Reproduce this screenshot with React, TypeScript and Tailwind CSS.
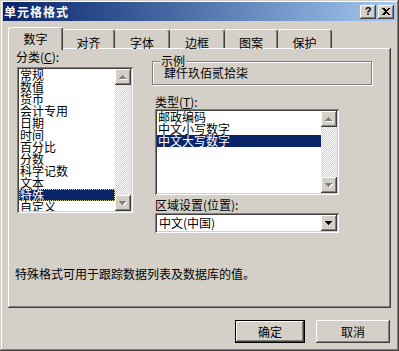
import React from "react";

const font = "font-['Noto_Sans_CJK_SC','Noto_Sans',sans-serif]";
const raised =
  "shadow-[inset_-1px_-1px_#404040,inset_1px_1px_#fff,inset_-2px_-2px_#808080]";
const sunken =
  "shadow-[inset_1px_1px_#808080,inset_-1px_-1px_#fff,inset_2px_2px_#404040,inset_-2px_-2px_#d4d0c8]";

function Arrow({ dir, dark }: { dir: "up" | "down"; dark?: boolean }) {
  const d =
    dir === "up"
      ? "M3 0h1v1h1v1h1v1h1v1H0V3h1V2h1V1h1z"
      : "M0 0h7v1H6v1H5v1H4v1H3V3H2V2H1V1H0z";
  return (
    <svg width="8" height="5" viewBox="0 0 8 5" shapeRendering="crispEdges">
      {!dark && <path d={d} transform="translate(1 1)" fill="#fff" />}
      <path d={d} fill={dark ? "#000" : "#808080"} />
    </svg>
  );
}

function ScrollButton({ dir, dark }: { dir: "up" | "down"; dark?: boolean }) {
  return (
    <div
      className={`w-[16px] h-[16px] shrink-0 bg-[#d4d0c8] flex items-center justify-center ${raised}`}
    >
      <Arrow dir={dir} dark={dark} />
    </div>
  );
}

function ScrollBar() {
  return (
    <div className="w-[16px] h-full flex flex-col shrink-0">
      <ScrollButton dir="up" />
      <div className="flex-1 bg-[image:repeating-conic-gradient(#d4d0c8_0_25%,#fff_0_50%)] bg-[length:2px_2px]" />
      <ScrollButton dir="down" />
    </div>
  );
}

function ListBox({
  items,
  selected,
  focus,
  className,
}: {
  items: string[];
  selected: number;
  focus?: boolean;
  className: string;
}) {
  return (
    <div className={`bg-white p-[2px] flex ${sunken} ${className}`}>
      <div className="flex-1 overflow-hidden flex flex-col">
        {items.map((t, i) => (
          <div
            key={t}
            className={`h-[12px] shrink-0 leading-[12px] text-[12px] pl-[1px] whitespace-nowrap ${
              i === selected
                ? `bg-[#0a246a] text-white ${
                    focus ? "outline-1 outline-dotted outline-[#d8d090] -outline-offset-1" : ""
                  }`
                : "text-black"
            }`}
          >
            {t}
          </div>
        ))}
      </div>
      <ScrollBar />
    </div>
  );
}

const tabs = [
  { label: "数字", w: "w-[55px]" },
  { label: "对齐", w: "w-[52px]" },
  { label: "字体", w: "w-[55px]" },
  { label: "边框", w: "w-[55px]" },
  { label: "图案", w: "w-[53px]" },
  { label: "保护", w: "w-[54px]" },
];

const categories = [
  "常规",
  "数值",
  "货币",
  "会计专用",
  "日期",
  "时间",
  "百分比",
  "分数",
  "科学记数",
  "文本",
  "特殊",
  "自定义",
];

export default function App() {
  return (
    <div
      className={`w-[399px] h-[351px] bg-[#d4d0c8] pt-[2px] px-[3px] flex flex-col text-black ${font} shadow-[inset_-1px_-1px_#404040,inset_1px_1px_#d4d0c8,inset_-2px_-2px_#808080,inset_2px_2px_#fff]`}
    >
      {/* title bar */}
      <div className="h-[19px] shrink-0 flex items-center justify-between pl-[1px] pr-[2px] bg-linear-to-r from-[#0a246a] to-[#a6caf0]">
        <span className="text-[12px] leading-[12px] font-bold tracking-[1px] text-white">
          单元格格式
        </span>
        <div className="flex gap-[2px]">
          <div
            className={`w-[16px] h-[14px] bg-[#d4d0c8] flex items-center justify-center text-[11px] font-bold leading-none font-['Liberation_Sans',sans-serif] ${raised}`}
          >
            ?
          </div>
          <div
            className={`w-[16px] h-[14px] bg-[#d4d0c8] flex items-center justify-center ${raised}`}
          >
            <svg width="8" height="7" viewBox="0 0 8 7" shapeRendering="crispEdges">
              <path
                d="M0 0h2l2 2 2-2h2L5 3.5 8 7H6L4 5 2 7H0l3-3.5z"
                fill="#000"
              />
            </svg>
          </div>
        </div>
      </div>

      <div className="px-[5px] flex flex-col">
        {/* tabs */}
        <div className="mt-[6px] h-[21px] flex items-start relative z-10">
          {tabs.map((t, i) =>
            i === 0 ? (
              <div
                key={t.label}
                className={`${t.w} h-[23px] bg-[#d4d0c8] border-l border-t border-white border-r border-r-[#404040] rounded-t-[3px] shadow-[inset_-1px_0_#808080] text-[12px] leading-[12px] flex justify-center pt-[5px]`}
              >
                {t.label}
              </div>
            ) : (
              <div
                key={t.label}
                className={`${t.w} h-[19px] mt-[2px] bg-[#d4d0c8] border-t border-white border-r border-r-[#404040] rounded-t-[3px] shadow-[inset_-1px_0_#808080] text-[12px] leading-[12px] flex justify-center pt-[7px]`}
              >
                {t.label}
              </div>
            )
          )}
        </div>

        {/* panel */}
        <div
          className={`h-[260px] pt-[3px] pl-[9px] flex flex-col ${raised}`}
        >
          <div className="flex">
            {/* left column */}
            <div className="w-[116px] flex flex-col">
              <div className="h-[12px] leading-[12px] text-[12px] -ml-[1px]">
                分类(<u>C</u>):
              </div>
              <ListBox
                items={categories}
                selected={10}
                focus
                className="mt-[4px] h-[146px]"
              />
            </div>

            {/* right column */}
            <div className="ml-[19px] flex flex-col">
              <div className="relative mt-[10px] h-[24px] w-[220px] border border-[#808080] shadow-[inset_1px_1px_#fff,1px_1px_#fff] pl-[11px] pt-[5px] text-[12px] leading-[12px]">
                <span className="absolute -top-[7px] left-[7px] px-[1px] bg-[#d4d0c8]">
                  示例
                </span>
                肆仟玖佰贰拾柒
              </div>
              <div className="mt-[11px] ml-[3px] h-[12px] leading-[12px] text-[12px]">
                类型(<u>T</u>):
              </div>
              <ListBox
                items={["邮政编码", "中文小写数字", "中文大写数字"]}
                selected={2}
                className="mt-[1px] ml-[3px] h-[86px] w-[184px]"
              />
              <div className="mt-[4px] ml-[3px] h-[12px] leading-[12px] text-[12px]">
                区域设置(位置):
              </div>
              <div
                className={`mt-[2px] ml-[3px] h-[20px] w-[184px] bg-white p-[2px] flex ${sunken}`}
              >
                <div className="flex-1 text-[12px] leading-[16px] pl-[2px]">
                  中文(中国)
                </div>
                <ScrollButton dir="down" dark />
              </div>
            </div>
          </div>

          <div className="mt-[35px] -ml-[2px] text-[12px] leading-[12px]">
            特殊格式可用于跟踪数据列表及数据库的值。
          </div>
        </div>

        {/* buttons */}
        <div className="mt-[12px] flex justify-end pr-[1px]">
          <div
            className={`w-[70px] h-[23px] border border-black bg-[#d4d0c8] flex items-center justify-center text-[12px] ${raised}`}
          >
            确定
          </div>
          <div
            className={`ml-[11px] w-[74px] h-[23px] bg-[#d4d0c8] flex items-center justify-center text-[12px] shadow-[inset_-1px_-1px_#404040,inset_1px_1px_#fff,inset_-2px_-2px_#808080]`}
          >
            取消
          </div>
        </div>
      </div>
    </div>
  );
}
